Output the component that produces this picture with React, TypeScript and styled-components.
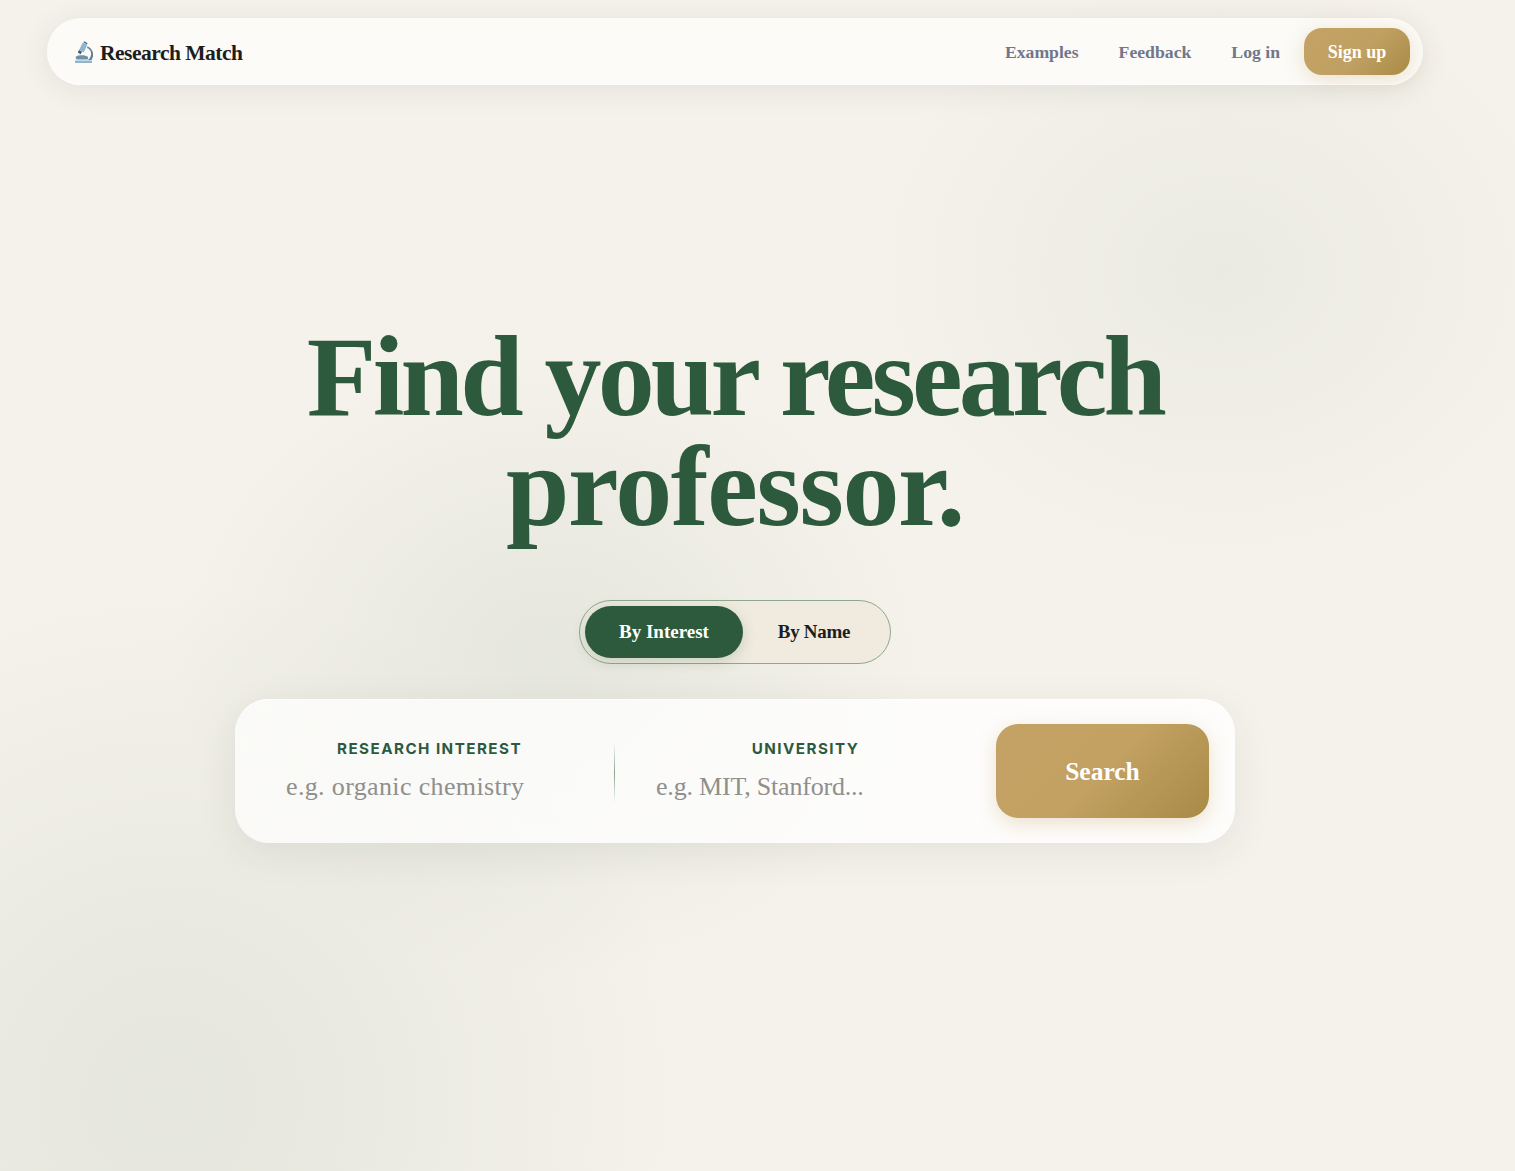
import React from 'react';
import styled, { createGlobalStyle } from 'styled-components';

const serif = '"Liberation Serif", "DejaVu Serif", serif';

const GlobalStyle = createGlobalStyle`
  html, body {
    margin: 0;
    padding: 0;
    height: 100%;
    overflow: hidden;
  }
  body {
    font-family: ${serif};
    background: #f5f2eb;
  }
`;

const Page = styled.div`
  width: 1515px;
  height: 1171px;
  overflow: hidden;
  background:
    radial-gradient(circle at 170px 1100px, rgba(45, 90, 61, 0.08) 0, rgba(45, 90, 61, 0.055) 180px, rgba(45, 90, 61, 0) 520px),
    radial-gradient(ellipse 380px 320px at 550px 660px, rgba(45, 90, 61, 0.08) 0, rgba(45, 90, 61, 0) 100%),
    radial-gradient(ellipse 360px 300px at 1220px 270px, rgba(45, 90, 61, 0.05) 0, rgba(45, 90, 61, 0) 100%),
    #f5f2eb;
`;

const Column = styled.div`
  width: 1470px;
  padding-top: 18px;
  display: flex;
  flex-direction: column;
  align-items: center;
`;

const Nav = styled.nav`
  box-sizing: border-box;
  width: 1376px;
  height: 67px;
  padding: 0 13px 0 27px;
  display: flex;
  align-items: center;
  justify-content: space-between;
  border-radius: 34px;
  background: #fcfbf8;
  box-shadow: 0 4px 30px rgba(40, 50, 40, 0.09), inset 0 -1px 0 rgba(255, 255, 255, 0.9);
`;

const Brand = styled.div`
  display: flex;
  align-items: center;
  gap: 7px;
  font-size: 21.5px;
  font-weight: 700;
  letter-spacing: -0.5px;
  color: #1d1d1d;
`;

const BrandName = styled.span`
  padding-top: 3px;
`;

const NavLinks = styled.div`
  display: flex;
  align-items: center;
`;

const NavLink = styled.a`
  padding-top: 2px;
  font-size: 17.7px;
  font-weight: 700;
  color: #71778a;
  margin-right: 40px;

  &:nth-child(3) {
    margin-right: 24px;
  }
`;

const SignUp = styled.button`
  width: 106px;
  height: 47px;
  padding: 2px 0 0;
  border: 0;
  border-radius: 18px;
  font-family: ${serif};
  font-size: 18px;
  font-weight: 700;
  color: #fff;
  background: linear-gradient(135deg, #c4a265 0%, #c0a062 55%, #a88a45 100%);
  box-shadow: 0 4px 20px rgba(196, 162, 101, 0.3);
`;

const Hero = styled.h1`
  width: 1000px;
  margin: 237px 0 0;
  font-size: 114px;
  line-height: 110px;
  font-weight: 700;
  text-align: center;
  color: #2d5a3d;
`;

const HeroLine = styled.span<{ $spacing: number }>`
  display: block;
  letter-spacing: ${p => p.$spacing}px;
`;

const Toggle = styled.div`
  box-sizing: border-box;
  width: 312px;
  height: 64px;
  margin-top: 58px;
  padding: 5px;
  display: flex;
  align-items: center;
  border: 1px solid #8fa78f;
  border-radius: 32px;
  background: linear-gradient(90deg, #ebe8dd, #f0ebde 60%);
`;

const ToggleOption = styled.button<{ $active?: boolean }>`
  height: 52px;
  width: ${p => (p.$active ? '158px' : '142px')};
  padding: 0;
  border: 0;
  border-radius: 26px;
  font-family: ${serif};
  font-size: 19px;
  font-weight: 700;
  letter-spacing: ${p => (p.$active ? '0' : '-0.3px')};
  color: ${p => (p.$active ? '#fff' : '#1d1d1d')};
  background: ${p => (p.$active ? '#2d5a3d' : 'transparent')};
  box-shadow: ${p => (p.$active ? '0 4px 14px rgba(45, 90, 61, 0.18)' : 'none')};
`;

const SearchCard = styled.form`
  box-sizing: border-box;
  width: 1000px;
  height: 144px;
  margin-top: 35px;
  padding: 0 26px;
  display: flex;
  align-items: center;
  gap: 16px;
  border-radius: 34px;
  background: linear-gradient(90deg, rgba(255, 255, 255, 0.74), rgba(255, 255, 255, 0.84));
  box-shadow: 0 10px 40px rgba(40, 50, 40, 0.08), inset 0 1px 0 rgba(255, 255, 255, 0.9);
`;

const Field = styled.label<{ $width: number }>`
  box-sizing: border-box;
  width: ${p => p.$width}px;
  flex: none;
  padding: 0 24px;
  display: flex;
  flex-direction: column;
  align-items: center;
  gap: 13px;
`;

const FieldLabel = styled.span`
  font-family: Inter, "Liberation Sans", sans-serif;
  font-size: 15.2px;
  font-weight: 700;
  letter-spacing: 1.45px;
  color: #2d5a3d;
`;

const FieldInput = styled.input<{ $spacing: number }>`
  box-sizing: border-box;
  width: 100%;
  border: 0;
  padding: 0 0 0 1px;
  outline: 0;
  background: transparent;
  font-family: ${serif};
  font-size: 26px;
  line-height: 32px;
  letter-spacing: ${p => p.$spacing}px;
  color: #1d1d1d;

  &::placeholder {
    color: #8f8f8c;
    opacity: 1;
  }
`;

const Divider = styled.div`
  flex: none;
  width: 1px;
  height: 60px;
  margin-top: 4px;
  background: linear-gradient(180deg, rgba(45, 90, 61, 0), rgba(45, 90, 61, 0.55) 50%, rgba(45, 90, 61, 0));
`;

const SearchButton = styled.button`
  flex: none;
  width: 213px;
  height: 94px;
  padding: 2px 0 0;
  border: 0;
  border-radius: 22px;
  font-family: ${serif};
  font-size: 25.5px;
  font-weight: 700;
  color: #fff;
  background: linear-gradient(135deg, #c4a265 0%, #c2a163 50%, #a88a45 100%);
  box-shadow: 0 6px 20px rgba(196, 162, 101, 0.3);
`;

const MicroscopeIcon = () => (
  <svg width="19" height="22" viewBox="0 0 19 22" aria-hidden="true">
    <path d="M1 19.5h17V22H1z" fill="#8fb4cc" />
    <path d="M2 15.500c3-1.600 8-1.600 11.500 0 .8.400.8 2.600 0 3H3c-1.200-.4-1.800-2.400-1-3z" fill="#6f8fa6" />
    <path d="M13 7c3.600 1 5 5 3.600 8.400-.5 1.400-1.400 2.600-2.600 3.600h3.400c2-2.800 2.400-6.600.6-9.600C17 7.400 15.400 6 13.500 5.500z" fill="#5f7f96" />
    <path d="M8.800 1.400 13.200 3.900 9.800 11.400 5.200 8.800z" fill="#8fb4cc" />
    <path d="M10.200.2 13.600 2.200 12.900 3.500 9.500 1.500z" fill="#4f6f86" />
    <path d="M5 9l3 1.800-1.400 2.500-2.800-1.700z" fill="#3f5a6e" />
  </svg>
);

const App = () => (
  <Page>
    <GlobalStyle />
    <Column>
      <Nav>
        <Brand>
          <MicroscopeIcon />
          <BrandName>Research Match</BrandName>
        </Brand>
        <NavLinks>
          <NavLink>Examples</NavLink>
          <NavLink>Feedback</NavLink>
          <NavLink>Log in</NavLink>
          <SignUp type="button">Sign up</SignUp>
        </NavLinks>
      </Nav>
      <Hero>
        <HeroLine $spacing={-3.8}>Find your research</HeroLine>
        <HeroLine $spacing={-1.4}>professor.</HeroLine>
      </Hero>
      <Toggle>
        <ToggleOption type="button" $active>
          By Interest
        </ToggleOption>
        <ToggleOption type="button">By Name</ToggleOption>
      </Toggle>
      <SearchCard>
        <Field $width={337}>
          <FieldLabel>RESEARCH INTEREST</FieldLabel>
          <FieldInput $spacing={0.36} placeholder="e.g. organic chemistry" />
        </Field>
        <Divider />
        <Field $width={349}>
          <FieldLabel>UNIVERSITY</FieldLabel>
          <FieldInput $spacing={-0.2} placeholder="e.g. MIT, Stanford..." />
        </Field>
        <SearchButton type="button">Search</SearchButton>
      </SearchCard>
    </Column>
  </Page>
);

export default App;
